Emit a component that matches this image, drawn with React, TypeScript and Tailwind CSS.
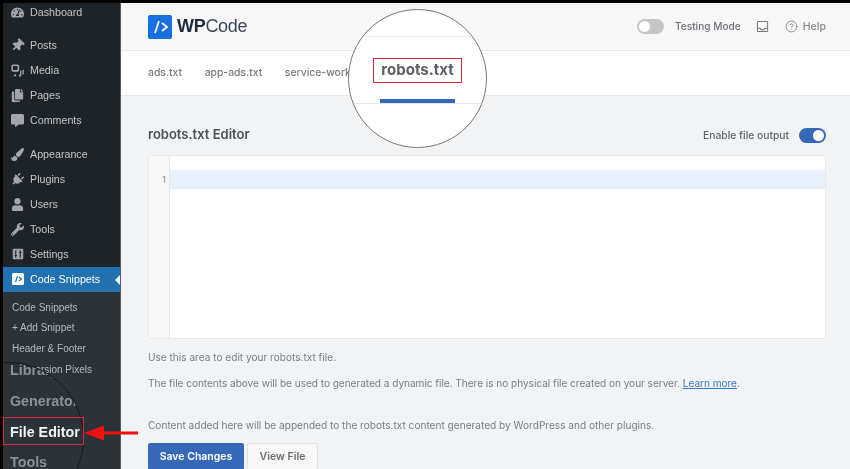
import type { ReactNode } from "react";
import { CircleHelp } from "lucide-react";
import {
  FaCommentAlt,
  FaCopy,
  FaPaintBrush,
  FaPlug,
  FaTachometerAlt,
  FaThumbtack,
  FaUser,
  FaWrench,
} from "react-icons/fa";

const sans = "font-['Liberation_Sans',Arial,sans-serif]";
const ui = "font-['Inter',Arial,sans-serif]";

function MediaIcon() {
  return (
    <svg viewBox="0 0 16 16" className="h-[13px] w-[13px]" fill="none" stroke="currentColor" strokeWidth="2">
      <rect x="1.5" y="1.5" width="7.5" height="7" rx="1" />
      <path d="M12 8v6M15 7v6" strokeWidth="1.6" />
      <circle cx="5" cy="14" r="1.4" fill="currentColor" stroke="none" />
      <circle cx="11" cy="14.4" r="1.4" fill="currentColor" stroke="none" />
    </svg>
  );
}

function SettingsIcon() {
  return (
    <svg viewBox="0 0 16 16" className="h-[12px] w-[12px]">
      <rect x="1" y="1" width="14" height="14" rx="1" fill="currentColor" />
      <path d="M5 3v10M11 3v10M3.5 10h3M9.5 6h3" stroke="#1d2327" strokeWidth="1.5" />
    </svg>
  );
}

function LogoMark({ className }: { className: string }) {
  return (
    <svg viewBox="0 0 24 24" className={className}>
      <rect width="24" height="24" rx="2" fill="#176fe0" />
      <path d="M11 6 7 18M14 8l5 4-5 4" fill="none" stroke="#fff" strokeWidth="1.8" />
    </svg>
  );
}

function MenuItem({ icon, label }: { icon: ReactNode; label: string }) {
  return (
    <div className="flex h-[25px] items-center">
      <span className="flex w-[27px] justify-center pl-[2px] text-[13px] text-[#a2a6aa]">{icon}</span>
      <span className="text-[10.7px] text-[#c3c6c9]">{label}</span>
    </div>
  );
}

function Sidebar() {
  return (
    <aside className={`relative h-full w-[118px] shrink-0 overflow-hidden border-r border-[#565c61] bg-[#1d2327] ${sans}`}>
      <div className="pb-[12px]">
        <div className="flex h-[18px] items-center">
          <span className="flex w-[27px] justify-center pl-[2px] text-[13px] text-[#a2a6aa]">
            <FaTachometerAlt />
          </span>
          <span className="text-[10.7px] text-[#c3c6c9]">Dashboard</span>
        </div>
      </div>
      <MenuItem icon={<FaThumbtack className="rotate-45" />} label="Posts" />
      <MenuItem icon={<MediaIcon />} label="Media" />
      <MenuItem icon={<FaCopy />} label="Pages" />
      <MenuItem icon={<FaCommentAlt />} label="Comments" />
      <div className="h-[8.5px]" />
      <MenuItem icon={<FaPaintBrush />} label="Appearance" />
      <MenuItem icon={<FaPlug className="rotate-45" />} label="Plugins" />
      <MenuItem icon={<FaUser />} label="Users" />
      <MenuItem icon={<FaWrench />} label="Tools" />
      <MenuItem icon={<SettingsIcon />} label="Settings" />
      <div className="relative flex h-[25px] items-center bg-[#2271b1]">
        <span className="flex w-[27px] justify-center pl-[2px]">
          <svg viewBox="0 0 24 24" className="h-[12px] w-[12px]">
            <rect width="24" height="24" rx="3" fill="#fff" />
            <path d="M11 6 7 18M14 8l5 4-5 4" fill="none" stroke="#2271b1" strokeWidth="2.4" />
          </svg>
        </span>
        <span className="text-[10.7px] text-white">Code Snippets</span>
        <span className="absolute right-0 top-[8px] h-0 w-0 border-y-[5px] border-r-[5px] border-y-transparent border-r-[#f2f3f5]" />
      </div>
      <div className="h-full bg-[#2c3338] pl-[9px] pt-[5.5px] text-[10px] text-[#b4b8bb]">
        <div className="flex h-[20.6px] items-center">Code Snippets</div>
        <div className="flex h-[20.6px] items-center">+ Add Snippet</div>
        <div className="flex h-[20.6px] items-center">Header &amp; Footer</div>
        <div className="flex h-[20.6px] items-center">Conversion Pixels</div>
      </div>
      {/* zoomed-in lens over the submenu */}
      <div className="absolute left-[-71px] top-[359px] flex h-[152px] w-[152px] flex-col overflow-hidden rounded-full border border-[#15181b] bg-[#2c3338] pl-[77px] text-[14.3px] font-bold text-[#8d9195]">
        <div className="mt-[-1px] flex h-[17px] shrink-0 items-center whitespace-nowrap">Library</div>
        <div className="mt-[14px] flex h-[17px] shrink-0 items-center whitespace-nowrap">Generator</div>
        <div className="mt-[14px] flex h-[17px] shrink-0 items-center whitespace-nowrap text-[#f3f3f3]">File Editor</div>
        <div className="mt-[13px] flex h-[17px] shrink-0 items-center whitespace-nowrap">Tools</div>
      </div>
    </aside>
  );
}

function Toggle({ on }: { on?: boolean }) {
  return (
    <span
      className={`flex h-[15px] w-[27px] items-center rounded-full px-[2px] ${
        on ? "justify-end bg-[#3568b7]" : "justify-start bg-[#c6c6c6]"
      }`}
    >
      <span className="h-[11px] w-[11px] rounded-full bg-white" />
    </span>
  );
}

function TopBar() {
  return (
    <header className={`flex h-[48px] shrink-0 items-center border-b border-[#e9e9ea] bg-[#f7f7f8] pl-[27px] pr-[24px] ${ui}`}>
      <LogoMark className="h-[24px] w-[24px]" />
      <span className={`ml-[5px] text-[18px] tracking-[-0.3px] text-[#3a4856] ${sans}`}>
        <span className="font-bold text-[#1c2b3a]">WP</span>Code
      </span>
      <div className="ml-auto flex items-center text-[10.1px] font-medium text-[#6e7175]">
        <Toggle />
        <span className="ml-[11px]">Testing Mode</span>
        <svg viewBox="0 0 14 14" className="ml-[15px] h-[13px] w-[13px]" fill="none" stroke="#777" strokeWidth="1.1">
          <rect x="1.5" y="1.5" width="11" height="11" rx="1" />
          <path d="M1.5 9h3l1 1.5h3l1-1.5h3" />
        </svg>
        <CircleHelp className="ml-[16px] h-[13px] w-[13px] text-[#777]" strokeWidth={1.5} />
        <span className="ml-[5px] text-[10.6px] text-[#85888b]">Help</span>
      </div>
    </header>
  );
}

function Tabs() {
  return (
    <nav className={`flex h-[45px] shrink-0 items-center gap-[22.5px] border-b border-[#e6e6e8] bg-white pl-[27px] text-[10.4px] font-medium text-[#777a7e] ${ui}`}>
      <span>ads.txt</span>
      <span>app-ads.txt</span>
      <span>service-worker.js</span>
    </nav>
  );
}

function Lens() {
  return (
    <div className={`absolute left-[227px] top-[6px] flex h-[139px] w-[139px] flex-col items-center overflow-hidden rounded-full border-[1.5px] border-[#777] bg-white ${ui}`}>
      <div className="h-[27px] w-full shrink-0 border-b border-[#ececee]" />
      <div className="mt-[21px] flex h-[25px] w-[89px] shrink-0 items-center justify-center border border-[#e0243c] text-[15px] font-bold text-[#5c5f63]">
        robots.txt
      </div>
      <div className="flex w-full shrink-0 justify-center border-b border-[#e6e6e8] pt-[16px]">
        <div className="h-[4px] w-[75px] bg-[#3568b7]" />
      </div>
    </div>
  );
}

function Editor() {
  return (
    <div className="mt-[12px] flex h-[184px] overflow-hidden rounded-[2px] border border-[#e8e8ea] bg-white">
      <div className="w-[21px] shrink-0 border-r border-[#e8e8ea] bg-[#f7f7f8] pt-[14px] pr-[3px] text-right text-[9px] leading-[19px] text-[#8b8e92]">
        1
      </div>
      <div className="flex-1 pt-[14px]">
        <div className="h-[19px] bg-[#e8f2fc]" />
      </div>
    </div>
  );
}

export default function App() {
  return (
    <div className="relative flex h-[469px] w-[850px] flex-col overflow-hidden bg-black blur-[0.4px]">
      <div className="h-[3px] shrink-0" />
      <div className="flex min-h-0 flex-1 pl-[3px]">
        <Sidebar />
        <main className="relative flex min-w-0 flex-1 flex-col bg-[#f2f3f5]">
          <TopBar />
          <Tabs />
          <section className={`pl-[27px] pr-[24px] pt-[32px] text-[10.1px] text-[#7b7e82] ${ui}`}>
            <div className="flex h-[15px] items-center justify-between">
              <h2 className="pb-[2px] text-[13px] font-semibold text-[#4b4e52]">robots.txt Editor</h2>
              <div className="flex items-center gap-[10px] text-[10.3px] font-medium text-[#606367]">
                Enable file output
                <Toggle on />
              </div>
            </div>
            <Editor />
            <p className="mt-[10px] h-[16px] leading-[16px]">Use this area to edit your robots.txt file.</p>
            <p className="mt-[10px] h-[16px] leading-[16px] tracking-[-0.04px] whitespace-nowrap">
              The file contents above will be used to generated a dynamic file. There is no physical file created on your server.{" "}
              <a className="text-[#3a78c0] underline">Learn more</a>.
            </p>
            <p className="mt-[26px] h-[16px] leading-[16px] whitespace-nowrap">
              Content added here will be appended to the robots.txt content generated by WordPress and other plugins.
            </p>
            <div className="mt-[10px] flex gap-[3px]">
              <button className="h-[27px] w-[96px] rounded-[2px] bg-[#3568b7] text-[10.5px] font-semibold text-white">Save Changes</button>
              <button className="h-[27px] w-[71px] rounded-[2px] border border-[#e3e3e5] bg-[#f7f7f8] text-[10.5px] font-semibold text-[#6b6e72]">View File</button>
            </div>
          </section>
          <Lens />
        </main>
      </div>
      {/* callout around the File Editor item */}
      <div className="absolute left-[3px] top-[417px] h-[28px] w-[81px] border-[1.5px] border-[#e0243c]" />
      <svg viewBox="0 0 54 16" className="absolute left-[84px] top-[425px] h-[16px] w-[54px]">
        <path d="M0 8 20 0.5V15.5Z" fill="#ee1111" />
        <rect x="18" y="6.5" width="36" height="3" fill="#ee1111" />
      </svg>
    </div>
  );
}
